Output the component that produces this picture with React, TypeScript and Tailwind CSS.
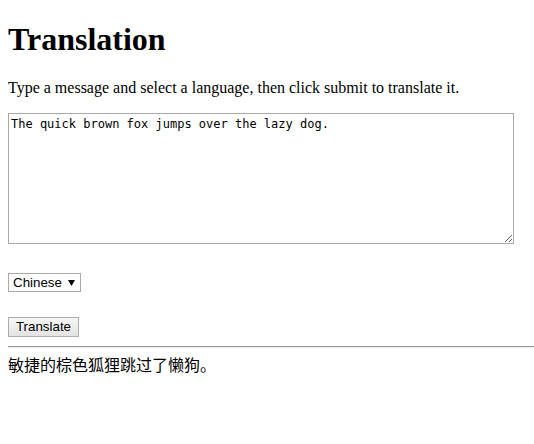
import { useState } from 'react';

export default function App() {
  const [message, setMessage] = useState('The quick brown fox jumps over the lazy dog.');
  const [language, setLanguage] = useState('Chinese');

  return (
    <div className="min-h-[444px] bg-white px-2 pt-[21px] text-black font-['Liberation_Serif',serif]">
      <h1 className="text-[32px] font-bold leading-[37px]">Translation</h1>

      <p className="mt-[21px] text-[16px] leading-[18px]">
        Type a message and select a language, then click submit to translate it.
      </p>

      {/* message box */}
      <textarea
        value={message}
        onChange={e => setMessage(e.target.value)}
        className="mt-4 block h-[131px] w-[506px] resize border border-[#a9a9a9] bg-white px-[2px] py-[3px] text-[12px] leading-[15px] font-['DejaVu_Sans_Mono',monospace] outline-none"
      />

      <div className="mt-[29px] flex">
        <div className="relative">
          <select
            value={language}
            onChange={e => setLanguage(e.target.value)}
            className="block h-[19px] w-[73px] appearance-none border border-[#a9a9a9] bg-white pl-[4px] text-[13.33px] leading-[17px] font-['Liberation_Sans',Arial,sans-serif] outline-none"
          >
            <option>Chinese</option>
            <option>French</option>
            <option>German</option>
            <option>Japanese</option>
            <option>Spanish</option>
          </select>
          <svg
            className="pointer-events-none absolute left-[60px] top-[7px]"
            width="7"
            height="6"
            viewBox="0 0 7 6"
          >
            <path d="M0 0 H7 L3.5 6 Z" fill="#000" />
          </svg>
        </div>
      </div>

      <div className="mt-[25px] flex">
        <button className="h-[20px] w-[71px] border border-[#adadad] bg-gradient-to-b from-[#f6f6f6] to-[#e3e3e3] text-[13.33px] leading-[18px] font-['Liberation_Sans',Arial,sans-serif]">
          Translate
        </button>
      </div>

      <div className="-mr-2 mt-[9px] border-t border-b border-t-[#9a9a9a] border-b-[#eeeeee]" />

      <div className="mt-[8px] text-[16px] leading-[20px] font-['Liberation_Serif','Noto_Sans_CJK_SC',serif]">
        敏捷的棕色狐狸跳过了懒狗。
      </div>
    </div>
  );
}
